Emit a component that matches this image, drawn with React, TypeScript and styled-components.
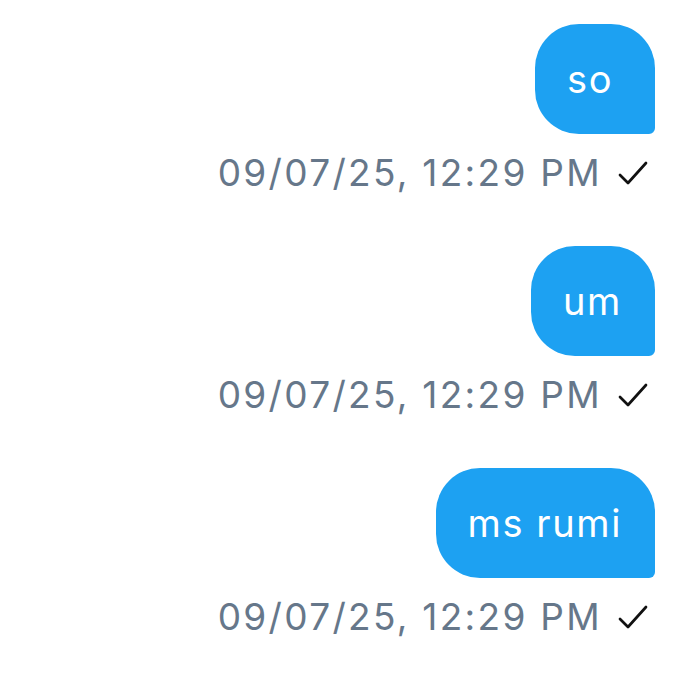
import React from "react";
import styled, { createGlobalStyle } from "styled-components";

const GlobalStyle = createGlobalStyle`
  body {
    margin: 0;
    background: #ffffff;
    font-family: Inter, "Liberation Sans", sans-serif;
  }
`;

// Column of messages, pinned to the right
const Thread = styled.div`
  display: flex;
  flex-direction: column;
  align-items: flex-end;
  gap: 51px;
  padding: 24px 35px 0 0;
`;

const Message = styled.div`
  display: flex;
  flex-direction: column;
  align-items: flex-end;
`;

// Outgoing blue bubble
const Bubble = styled.div`
  display: flex;
  align-items: center;
  justify-content: flex-start;
  box-sizing: border-box;
  height: 110px;
  min-width: 120px;
  padding: 0 33px 0 32px;
  background-color: #1da1f2;
  color: #ffffff;
  font-size: 38px;
  letter-spacing: 1.6px;
  border-radius: 44px 44px 6px 44px;
`;

const Meta = styled.div`
  display: flex;
  align-items: center;
  gap: 16px;
  margin-top: 17px;
  margin-right: 7px;
`;

const Time = styled.span`
  font-size: 37px;
  line-height: 44px;
  letter-spacing: 2.3px;
  color: #66778a;
`;

const Check = () => (
  <svg width="30" height="26" viewBox="0 0 30 26" fill="none">
    <path d="M2 15 L10 23 L28 3" stroke="#111" strokeWidth="2.7" strokeLinecap="round" strokeLinejoin="round" />
  </svg>
);

const messages = [
  { text: "so", time: "09/07/25, 12:29 PM" },
  { text: "um", time: "09/07/25, 12:29 PM" },
  { text: "ms rumi", time: "09/07/25, 12:29 PM" },
];

const App: React.FC = () => {
  return (
    <>
      <GlobalStyle />
      <Thread>
        {messages.map((m, i) => (
          <Message key={i}>
            <Bubble>{m.text}</Bubble>
            <Meta>
              <Time>{m.time}</Time>
              <Check />
            </Meta>
          </Message>
        ))}
      </Thread>
    </>
  );
};

export default App;
